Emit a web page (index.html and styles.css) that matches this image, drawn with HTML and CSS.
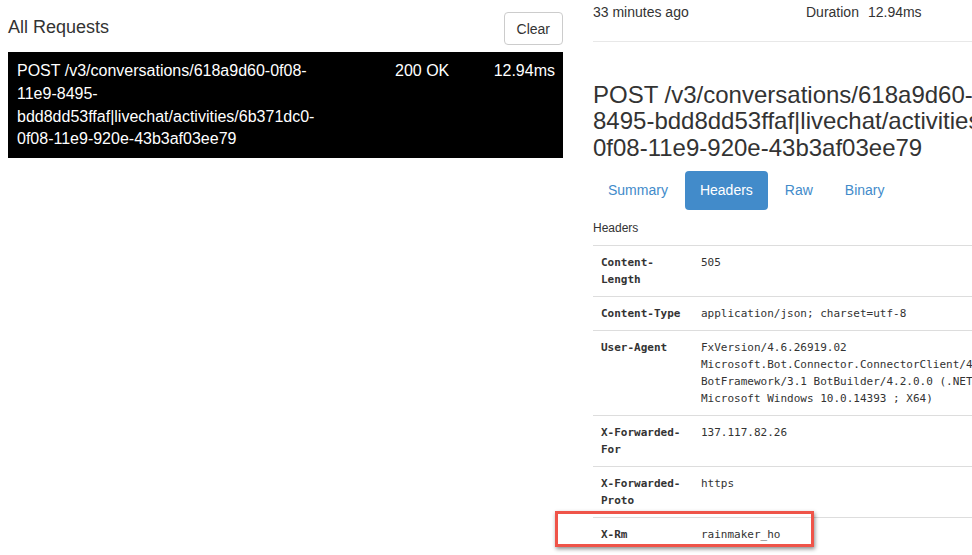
FILE: index.html
```html
<!DOCTYPE html>
<html lang="en">
<head>
<meta charset="utf-8">
<title>All Requests</title>
<link rel="stylesheet" href="styles.css">
</head>
<body>
<div class="page">
  <section class="left">
    <div class="left-head">
      <h2 class="list-title">All Requests</h2>
      <button class="btn" type="button">Clear</button>
    </div>
    <div class="req-row">
      <div class="req-path">POST /v3/conversations/618a9d60-0f08-11e9-8495-bdd8dd53ffaf|livechat/activities/6b371dc0-0f08-11e9-920e-43b3af03ee79</div>
      <div class="req-status">200 OK</div>
      <div class="req-dur">12.94ms</div>
    </div>
  </section>

  <section class="right">
    <div class="meta">
      <span>33 minutes ago</span>
      <span class="dur"><span>Duration</span><span>12.94ms</span></span>
    </div>
    <hr class="sep">
    <h3 class="req-title">POST /v3/conversations/618a9d60-0f08-11e9-8495-bdd8dd53ffaf|livechat/activities/6b371dc0-0f08-11e9-920e-43b3af03ee79</h3>
    <ul class="pills">
      <li><a href="#">Summary</a></li>
      <li class="active"><a href="#">Headers</a></li>
      <li><a href="#">Raw</a></li>
      <li><a href="#">Binary</a></li>
    </ul>
    <table class="headers">
      <caption>Headers</caption>
      <tbody>
        <tr><th>Content-Length</th><td>505</td></tr>
        <tr><th>Content-Type</th><td>application/json; charset=utf-8</td></tr>
        <tr><th>User-Agent</th><td>FxVersion/4.6.26919.02 Microsoft.Bot.Connector.ConnectorClient/4.2.0.0 Microsoft-BotFramework/3.1 BotBuilder/4.2.0.0 (.NETCore/4.6.26919.02 Microsoft Windows 10.0.14393 ; X64)</td></tr>
        <tr><th>X-Forwarded-For</th><td>137.117.82.26</td></tr>
        <tr><th>X-Forwarded-Proto</th><td>https</td></tr>
        <tr><th class="mark-cell">X-Rm<span class="highlight"></span></th><td>rainmaker_ho</td></tr>
      </tbody>
    </table>
  </section>
</div>
</body>
</html>
```
FILE: styles.css
```css
html, body {
  margin: 0;
  padding: 0;
}
body {
  width: 972px;
  height: 555px;
  overflow: hidden;
  background: #fff;
  color: #333;
  font-family: "Liberation Sans", Arial, sans-serif;
  font-size: 14px;
  line-height: 20px;
}
.page {
  display: flex;
  gap: 30px;
  padding-left: 8px;
}
.left {
  flex: none;
  width: 555px;
  padding-top: 12px;
}
.left-head {
  display: flex;
  justify-content: space-between;
  align-items: center;
  height: 33px;
  margin-bottom: 7px;
}
.list-title {
  margin: 0 0 3px 0;
  font-size: 18px;
  font-weight: normal;
  line-height: 22px;
  color: #333;
}
.btn {
  height: 33px;
  padding: 0 12px;
  border: 1px solid #ccc;
  border-radius: 4px;
  background: #fff;
  color: #333;
  font-family: inherit;
  font-size: 14px;
}
.req-row {
  display: grid;
  grid-template-columns: 378px 1fr auto;
  background: #000;
  color: #fff;
  padding: 8px 8px 7px 9px;
  font-size: 16px;
  line-height: 22.8px;
}
.req-path {
  padding-right: 63px;
}
.right {
  flex: none;
  width: 540px;
  padding-top: 2px;
}
.meta {
  display: grid;
  grid-template-columns: 213px auto;
}
.dur {
  display: flex;
  gap: 9px;
}
.sep {
  margin: 19px 0 0 0;
  border: 0;
  border-top: 1px solid #e8e8e8;
  height: 0;
}
.req-title {
  margin: 40px 0 10px 0;
  font-size: 24px;
  font-weight: normal;
  line-height: 26.4px;
  color: #333;
}
.pills {
  display: flex;
  gap: 2px;
  list-style: none;
  margin: 0;
  padding: 0;
}
.pills a {
  display: block;
  padding: 10px 15px;
  line-height: 19px;
  border-radius: 4px;
  color: #428bca;
  text-decoration: none;
}
.pills .active a {
  background: #428bca;
  color: #fff;
}
.headers {
  width: 100%;
  border-collapse: collapse;
  font-family: "DejaVu Sans Mono", "Liberation Mono", monospace;
  font-size: 11px;
  line-height: 17px;
}
.headers caption {
  text-align: left;
  font-family: "Liberation Sans", Arial, sans-serif;
  font-size: 12px;
  line-height: 17px;
  padding: 10px 0 8px 0;
  color: #333;
}
.headers tr {
  border-top: 1px solid #dddddd;
}
.headers th,
.headers td {
  padding: 8px;
  vertical-align: top;
  text-align: left;
}
.headers th {
  width: 84px;
  font-weight: bold;
}
.mark-cell {
  position: relative;
}
.highlight {
  position: absolute;
  left: -38px;
  top: -7px;
  width: 253px;
  height: 30px;
  border: 3px solid #ef5449;
  box-shadow: 1px 2px 4px rgba(0, 0, 0, 0.45);
}
```
